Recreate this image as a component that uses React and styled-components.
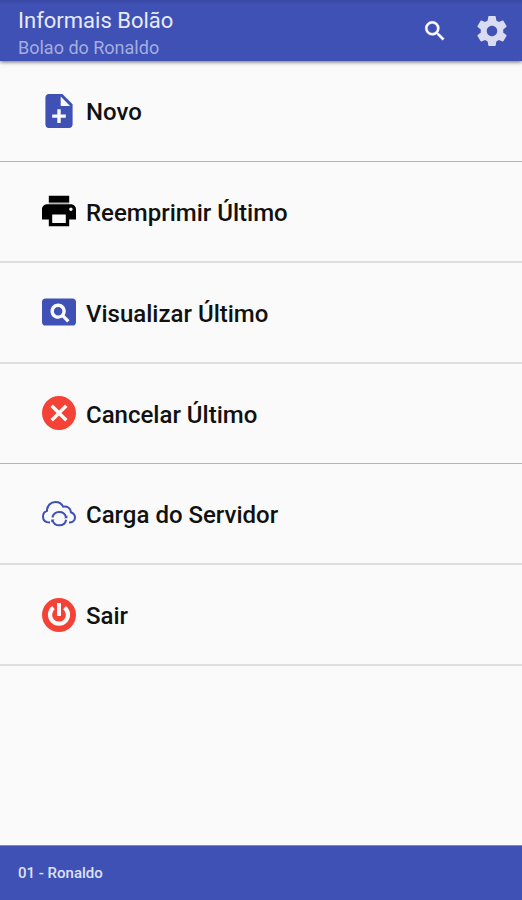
import React from 'react';
import styled, { createGlobalStyle } from 'styled-components';

const menuItems = [
  { id: 'novo', label: 'Novo', color: '#3f51b5', icon: <NoteAddIcon />, line: 'dark' },
  { id: 'reemprimir', label: 'Reemprimir Último', color: '#000000', icon: <PrintIcon />, line: 'light' },
  { id: 'visualizar', label: 'Visualizar Último', color: '#3f51b5', icon: <PageviewIcon />, line: 'light' },
  { id: 'cancelar', label: 'Cancelar Último', color: '#f44336', icon: <CancelIcon />, line: 'dark' },
  { id: 'carga', label: 'Carga do Servidor', color: '#3f51b5', icon: <CloudSyncIcon />, line: 'light' },
  { id: 'sair', label: 'Sair', color: '#f44336', icon: <PowerIcon />, line: 'light' },
];

const App = () => {
  return (
    <>
      <GlobalStyle />
      <Screen>
        <AppBar>
          <Titles>
            <Title>Informais Bolão</Title>
            <Subtitle>Bolao do Ronaldo</Subtitle>
          </Titles>
          <Actions>
            <BarButton type="button" aria-label="Buscar" $size={26}>
              <SearchIcon />
            </BarButton>
            <BarButton type="button" aria-label="Configurações" $size={36} $faded>
              <SettingsIcon />
            </BarButton>
          </Actions>
        </AppBar>
        <Menu>
          {menuItems.map((item) => (
            <MenuItem key={item.id} $line={item.line}>
              <MenuButton type="button">
                <MenuIcon $color={item.color}>{item.icon}</MenuIcon>
                <MenuLabel>{item.label}</MenuLabel>
              </MenuButton>
            </MenuItem>
          ))}
        </Menu>
        <Footer>01 - Ronaldo</Footer>
      </Screen>
    </>
  );
};

export default App;

// Icons
function SearchIcon() {
  return (
    <svg viewBox="0 0 24 24" aria-hidden="true">
      <path
        stroke="currentColor"
        strokeWidth="0.4"
        d="M15.5 14h-.79l-.28-.27A6.47 6.47 0 0 0 16 9.5 6.5 6.5 0 1 0 9.5 16c1.61 0 3.09-.59 4.23-1.57l.27.28v.79l5 4.99L20.49 19l-4.99-5zm-6 0C7.01 14 5 11.99 5 9.5S7.01 5 9.5 5 14 7.01 14 9.5 11.99 14 9.5 14z"
      />
    </svg>
  );
}

function SettingsIcon() {
  return (
    <svg viewBox="0 0 24 24" aria-hidden="true">
      <path d="M19.43 12.98c.04-.32.07-.64.07-.98s-.03-.66-.07-.98l2.11-1.65c.19-.15.24-.42.12-.64l-2-3.46c-.12-.22-.39-.3-.61-.22l-2.49 1c-.52-.4-1.08-.73-1.69-.98l-.38-2.65C14.46 2.18 14.25 2 14 2h-4c-.25 0-.46.18-.49.42l-.38 2.65c-.61.25-1.17.59-1.69.98l-2.49-1c-.23-.09-.49 0-.61.22l-2 3.46c-.13.22-.07.49.12.64l2.11 1.65c-.04.32-.07.65-.07.98s.03.66.07.98l-2.11 1.65c-.19.15-.24.42-.12.64l2 3.46c.12.22.39.3.61.22l2.49-1c.52.4 1.08.73 1.69.98l.38 2.65c.03.24.24.42.49.42h4c.25 0 .46-.18.49-.42l.38-2.65c.61-.25 1.17-.59 1.69-.98l2.49 1c.23.09.49 0 .61-.22l2-3.46c.12-.22.07-.49-.12-.64l-2.11-1.65zM12 15.5c-1.93 0-3.5-1.57-3.5-3.5s1.57-3.5 3.5-3.5 3.5 1.57 3.5 3.5-1.57 3.5-3.5 3.5z" />
    </svg>
  );
}

function NoteAddIcon() {
  return (
    <svg viewBox="2 2 20 20" aria-hidden="true">
      <path d="M14 2H6c-1.1 0-1.99.9-1.99 2L4 20c0 1.1.89 2 1.99 2H18c1.1 0 2-.9 2-2V8l-6-6zm2 14h-3v3h-2v-3H8v-2h3v-3h2v3h3v2zm-3-7V3.5L18.5 9H13z" />
    </svg>
  );
}

function PrintIcon() {
  return (
    <svg viewBox="2 2 20 20" aria-hidden="true">
      <path fill="#b8b8b8" d="M6 6.500h12V8H6z" />
      <path d="M19 8H5c-1.66 0-3 1.34-3 3v6h4v4h12v-4h4v-6c0-1.66-1.34-3-3-3zm-3 11H8v-5h8v5zm3-7c-.55 0-1-.45-1-1s.45-1 1-1 1 .45 1 1-.45 1-1 1zm-1-9H6v4h12V3z" />
    </svg>
  );
}

function PageviewIcon() {
  return (
    <svg viewBox="2 2 20 20" aria-hidden="true">
      <path d="M11.5 9C10.12 9 9 10.12 9 11.5s1.12 2.5 2.5 2.5 2.5-1.12 2.5-2.5S12.88 9 11.5 9zM20 4H4c-1.1 0-2 .9-2 2v12c0 1.1.9 2 2 2h16c1.1 0 2-.9 2-2V6c0-1.1-.9-2-2-2zm-3.21 14.21l-2.91-2.91c-.69.44-1.51.7-2.39.7C9.01 16 7 13.99 7 11.5S9.01 7 11.5 7 16 9.01 16 11.5c0 .88-.26 1.69-.7 2.39l2.91 2.9-1.42 1.42z" />
    </svg>
  );
}

function CancelIcon() {
  return (
    <svg viewBox="2 2 20 20" aria-hidden="true">
      <path d="M12 2C6.47 2 2 6.47 2 12s4.47 10 10 10 10-4.47 10-10S17.53 2 12 2zm5 13.59L15.59 17 12 13.41 8.41 17 7 15.59 10.59 12 7 8.41 8.41 7 12 10.59 15.59 7 17 8.41 13.41 12 17 15.59z" />
    </svg>
  );
}

function CloudSyncIcon() {
  return (
    <svg viewBox="0 0 34 34" aria-hidden="true">
      <g fill="none" stroke="currentColor" strokeWidth="2">
        <path d="M8 25.500C3.500 25.500 1 23 1 19.500C1 16.800 2.600 14.600 5 13.900C4.900 8.800 8.600 4.900 13.500 4.900C17 4.900 19.800 6.700 21.200 9.700C25.500 9 28.700 11.500 28.900 15.300C31.500 16.200 33 18.200 33 20.800C33 23.500 30.500 25.500 27 25.500" />
        <path d="M10.400 20.500A7 7 0 0 1 24 20.200M24.200 22.800A7 7 0 0 1 10.600 23.200" />
      </g>
      <path d="M25.400 18.200v3h-3.400zM9.200 25.400v-3h3.400z" />
    </svg>
  );
}

function PowerIcon() {
  return (
    <svg viewBox="0 0 34 34" aria-hidden="true">
      <circle cx="17" cy="17" r="17" />
      <g fill="none" stroke="#fafafa">
        <path strokeWidth="4.200" d="M11.500 9.600A9 9 0 1 0 22.500 9.600" />
        <path strokeWidth="4" d="M17 5v13" />
      </g>
    </svg>
  );
}

// Styled components
const GlobalStyle = createGlobalStyle`
  * {
    box-sizing: border-box;
  }

  body {
    margin: 0;
    background-color: #fafafa;
    font-family: Roboto, sans-serif;
  }

  button {
    border: none;
    padding: 0;
    background: none;
    font-family: inherit;
    cursor: pointer;
  }

  svg {
    display: block;
    width: 100%;
    fill: currentColor;
  }
`;

const Screen = styled.div`
  display: flex;
  flex-direction: column;
  min-height: 100vh;
`;

const AppBar = styled.header`
  display: flex;
  justify-content: space-between;
  align-items: flex-start;
  padding: 7px 12px 1px 18px;
  background: linear-gradient(#3646a0, #3f51b5 4px);
  box-shadow: 0 1px 4px rgba(0, 0, 0, 0.6);
`;

const Titles = styled.div`
  display: flex;
  flex-direction: column;
`;

const Title = styled.h1`
  margin: 0;
  color: #e8eafa;
  font-size: 22px;
  font-weight: 400;
  line-height: 28px;
`;

const Subtitle = styled.p`
  margin: 0;
  color: #a4aee0;
  font-size: 18px;
  line-height: 25px;
`;

const Actions = styled.div`
  display: flex;
  align-items: center;
  gap: 26px;
  padding-top: 6px;
`;

const BarButton = styled.button`
  width: ${({ $size }) => $size}px;
  color: ${({ $faded }) => ($faded ? '#d9dcf0' : '#ffffff')};
`;

const Menu = styled.ul`
  display: grid;
  grid-template-rows: repeat(6, 1fr);
  min-height: 605px;
  margin: 0;
  padding: 0;
  list-style: none;
`;

const MenuItem = styled.li`
  display: flex;
  border-bottom: ${({ $line }) => ($line === 'dark' ? '1px solid #b4b4b4' : '2px solid #dedede')};
`;

const MenuButton = styled.button`
  display: flex;
  flex: 1;
  align-items: center;
  gap: 10px;
  padding: 0 42px;
  color: #111111;
  font-size: 24px;
  font-weight: 500;
  line-height: 32px;
  text-align: left;
`;

const MenuIcon = styled.span`
  width: 34px;
  color: ${({ $color }) => $color};
`;

const MenuLabel = styled.span`
  padding-top: 3px;
`;

const Footer = styled.footer`
  margin-top: auto;
  padding: 17px 18px;
  border-top: 1px solid #7c87c8;
  background-color: #3f51b5;
  color: #dfe2f5;
  font-size: 15px;
  font-weight: 500;
  line-height: 20px;
`;
